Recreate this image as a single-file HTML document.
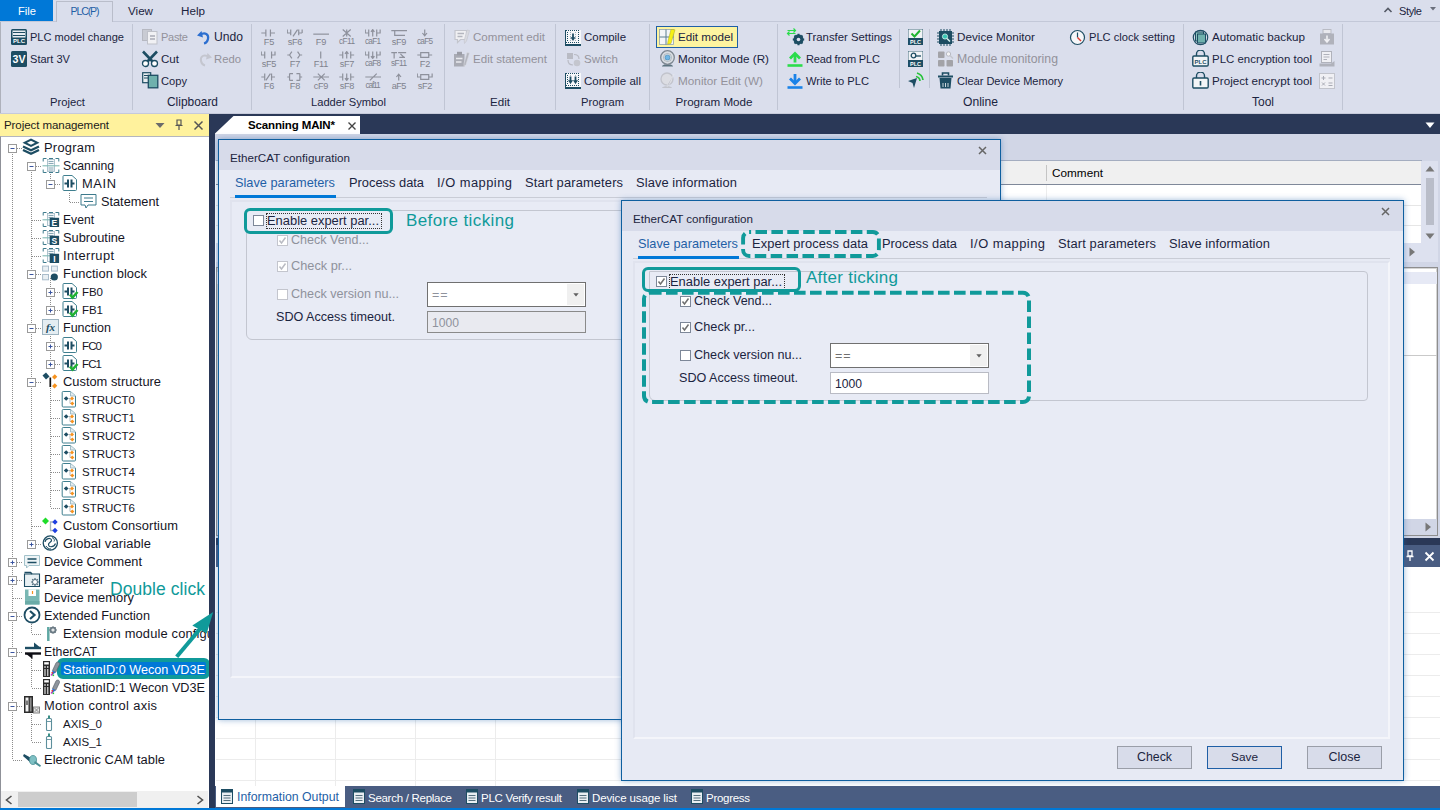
<!DOCTYPE html>
<html lang="en"><head><meta charset="utf-8"><title>PLC Editor - EtherCAT configuration</title>
<style>
html,body{margin:0;padding:0}
body{width:1440px;height:810px;overflow:hidden;position:relative;background:#ffffff;font-family:"Liberation Sans", sans-serif}
#app{position:absolute;left:0;top:0;width:1440px;height:810px;overflow:hidden}
#app div,#app svg,#app span{position:absolute}
.t{white-space:nowrap;line-height:20px;height:20px}
</style></head>
<body><div id="app">
<div style="left:0px;top:0px;width:1440px;height:114px;background:#dadeec"></div>
<div style="left:0px;top:21px;width:1440px;height:1px;background:#c3c8d8"></div>
<div style="left:0px;top:22px;width:1px;height:92px;background:#aeb1bb"></div>
<div style="left:0px;top:113px;width:1440px;height:1px;background:#c6cada"></div>
<div style="left:0px;top:0px;width:53px;height:21px;background:#0078d7"></div>
<span class="t" style="left:18px;top:1.4px;font-size:11.17px;color:#ffffff;letter-spacing:0.005px;">File</span>
<div style="left:56px;top:1px;width:57px;height:21px;background:#dadeec;border:1px solid #b9bdca;border-bottom:none;box-sizing:border-box"></div>
<span class="t" style="left:70.5px;top:1.4px;font-size:10.58px;color:#1f5fa6;letter-spacing:-1.137px;">PLC(P)</span>
<span class="t" style="left:128px;top:1.4px;font-size:11.63px;color:#1b2440;">View</span>
<span class="t" style="left:181px;top:1.4px;font-size:11.67px;color:#1b2440;letter-spacing:0.005px;">Help</span>
<span class="t" style="left:1399px;top:1.4px;font-size:11.04px;color:#1b2440;letter-spacing:-0.383px;">Style</span>
<svg style="left:1383px;top:6px;" width="10" height="8" viewBox="0 0 10 8"><path d="M1.5 6 L5 2.5 L8.5 6" fill="none" stroke="#555a66" stroke-width="1.6"/></svg>
<svg style="left:1429px;top:6px;" width="8" height="6" viewBox="0 0 8 6"><path d="M1 1 L7 1 L4 4.5 Z" fill="#6a6f7c"/></svg>
<div style="left:132px;top:24px;width:1px;height:86px;background:#c0c5d4"></div>
<div style="left:251px;top:24px;width:1px;height:86px;background:#c0c5d4"></div>
<div style="left:444px;top:24px;width:1px;height:86px;background:#c0c5d4"></div>
<div style="left:555px;top:24px;width:1px;height:86px;background:#c0c5d4"></div>
<div style="left:649px;top:24px;width:1px;height:86px;background:#c0c5d4"></div>
<div style="left:777px;top:24px;width:1px;height:86px;background:#c0c5d4"></div>
<div style="left:1183px;top:24px;width:1px;height:86px;background:#c0c5d4"></div>
<div style="left:1342px;top:24px;width:1px;height:86px;background:#c0c5d4"></div>
<div style="left:899px;top:29px;width:1px;height:59px;background:#c0c5d4"></div>
<div style="left:929px;top:29px;width:1px;height:59px;background:#c0c5d4"></div>
<span class="t" style="left:50.0px;top:92.4px;font-size:11.24px;color:#1b2440;letter-spacing:0.005px;">Project</span>
<span class="t" style="left:167.0px;top:92.4px;font-size:11.91px;color:#1b2440;letter-spacing:0.004px;">Clipboard</span>
<span class="t" style="left:311.0px;top:92.4px;font-size:11.15px;color:#1b2440;letter-spacing:0.005px;">Ladder Symbol</span>
<span class="t" style="left:490.0px;top:92.4px;font-size:11.6px;color:#1b2440;letter-spacing:0.005px;">Edit</span>
<span class="t" style="left:581.0px;top:92.4px;font-size:11.21px;color:#1b2440;letter-spacing:0.005px;">Program</span>
<span class="t" style="left:675.5px;top:92.4px;font-size:11.64px;color:#1b2440;letter-spacing:0.010px;">Program Mode</span>
<span class="t" style="left:963.0px;top:92.4px;font-size:12.11px;color:#1b2440;letter-spacing:-0.003px;">Online</span>
<span class="t" style="left:1252.0px;top:92.4px;font-size:11.99px;color:#1b2440;">Tool</span>
<span class="t" style="left:30px;top:27.4px;font-size:11.05px;color:#1b2440;letter-spacing:0.002px;">PLC model change</span>
<span class="t" style="left:30px;top:49.4px;font-size:11.07px;color:#1b2440;letter-spacing:0.004px;">Start 3V</span>
<svg style="left:11px;top:29px;" width="16" height="16" viewBox="0 0 16 16"><rect x="0" y="0" width="16" height="16" rx="1.5" fill="#1d4d63"/><rect x="1.5" y="1.5" width="13" height="7" fill="#e8edf2"/><path d="M2 3.5H14M2 6.5H14" stroke="#1d4d63" stroke-width="1.2"/><text x="8" y="14.3" font-size="6" font-family="Liberation Sans,sans-serif" font-weight="bold" fill="#fff" text-anchor="middle">PLC</text></svg>
<svg style="left:11px;top:51px;" width="16" height="16" viewBox="0 0 16 16"><rect x="0" y="0" width="16" height="16" rx="1.5" fill="#1d4d63"/><text x="8" y="12" font-size="10" font-family="Liberation Sans,sans-serif" font-weight="bold" fill="#fff" text-anchor="middle" textLength="13" lengthAdjust="spacingAndGlyphs">3V</text></svg>
<span class="t" style="left:161px;top:27.4px;font-size:11.04px;color:#93929b;letter-spacing:-0.305px;">Paste</span>
<span class="t" style="left:161px;top:49.4px;font-size:11.56px;color:#1b2440;letter-spacing:0.016px;">Cut</span>
<span class="t" style="left:161px;top:71.4px;font-size:11.14px;color:#1b2440;letter-spacing:0.005px;">Copy</span>
<span class="t" style="left:214px;top:27.4px;font-size:12.13px;color:#1b2440;">Undo</span>
<span class="t" style="left:214px;top:49.4px;font-size:11.29px;color:#93929b;letter-spacing:0.005px;">Redo</span>
<svg style="left:142px;top:29px;" width="16" height="16" viewBox="0 0 16 16"><rect x="0.5" y="0.5" width="9" height="11" fill="#c9cbd3" stroke="#b6b8c1"/><rect x="5.5" y="2.5" width="9.5" height="12.5" fill="#f1f1f4" stroke="#bfc1c9"/><path d="M8 7H13M8 10H13" stroke="#a9abb5" stroke-width="1.3"/></svg>
<svg style="left:141px;top:50px;" width="18" height="18" viewBox="0 0 18 18"><path d="M2 1.5 L12 12 M16 1.5 L6 12" stroke="#1d4d63" stroke-width="2.6" stroke-linecap="butt"/><circle cx="4.5" cy="13.5" r="3" fill="#fff" stroke="#1d4d63" stroke-width="1.3"/><circle cx="13.5" cy="13.5" r="3" fill="#fff" stroke="#1d4d63" stroke-width="1.3"/></svg>
<svg style="left:142px;top:72px;" width="17" height="17" viewBox="0 0 17 17"><rect x="0.7" y="0.7" width="8" height="10" fill="#e9eef1" stroke="#1d4d63" stroke-width="1.2"/><path d="M2 3.5H6M2 6H6" stroke="#1d4d63" stroke-width="1"/><rect x="6.3" y="3.3" width="9.5" height="12.5" fill="#6fb1ad" stroke="#1d4d63" stroke-width="1.3"/></svg>
<svg style="left:196px;top:30px;" width="15" height="15" viewBox="0 0 15 15"><path d="M5.5 1 L1 5.5 L7 7.5 Z" fill="#2c6fd0"/><path d="M4 5 C9 1.5 13 4.5 12 9 C11.5 11.5 10 13 8 13.5" fill="none" stroke="#2c6fd0" stroke-width="2.2"/></svg>
<svg style="left:198px;top:52px;" width="15" height="15" viewBox="0 0 15 15"><path d="M9.5 1 L14 5.5 L8 7.5 Z" fill="#c4c6cf"/><path d="M11 5 C6 1.5 2 4.5 3 9 C3.5 11.5 5 13 7 13.5" fill="none" stroke="#c4c6cf" stroke-width="2"/></svg>
<svg style="left:261px;top:28.7px;" width="16" height="8" viewBox="-0.250 -0.500 14 7"><path d="M0 3H4M4 0V6M8 0V6M8 3H12" fill="none" stroke="#8e919c" stroke-width="1.050"/></svg>
<span class="t" style="left:263.75px;top:32.199999999999996px;font-size:9.2px;color:#7f828c;letter-spacing:-0.234px;">F5</span>
<svg style="left:287px;top:28.7px;" width="16" height="8" viewBox="-0.250 -0.500 14 7"><path d="M0 0V3H3M3 0V5M5 6L9 0M10 0V5M10 3H13M13 0V3" fill="none" stroke="#8e919c" stroke-width="1.050"/></svg>
<span class="t" style="left:287.75px;top:32.199999999999996px;font-size:9.2px;color:#7f828c;letter-spacing:-0.414px;">sF6</span>
<svg style="left:313px;top:28.7px;" width="16" height="8" viewBox="-0.250 -0.500 14 7"><path d="M0 4H14" fill="none" stroke="#8e919c" stroke-width="1.050"/></svg>
<span class="t" style="left:315.75px;top:32.199999999999996px;font-size:9.2px;color:#7f828c;letter-spacing:-0.234px;">F9</span>
<svg style="left:339px;top:28.7px;" width="16" height="8" viewBox="-0.250 -0.500 14 7"><path d="M3 0L10 6M10 0L3 6M6.5 0V6" fill="none" stroke="#8e919c" stroke-width="1.050"/></svg>
<span class="t" style="left:339.0px;top:32.199999999999996px;font-size:8.28px;color:#7f828c;letter-spacing:-0.589px;">cF11</span>
<svg style="left:365px;top:28.7px;" width="16" height="8" viewBox="-0.250 -0.500 14 7"><path d="M0 0V3H3M3 0V6M6.5 6V0M5 2L6.5 0L8 2M10 0V6M10 3H13V0" fill="none" stroke="#8e919c" stroke-width="1.050"/></svg>
<span class="t" style="left:365.0px;top:32.199999999999996px;font-size:8.28px;color:#7f828c;letter-spacing:-0.797px;">caF1</span>
<svg style="left:391px;top:28.7px;" width="16" height="8" viewBox="-0.250 -0.500 14 7"><path d="M0 1H14M3 1V5H12" fill="none" stroke="#8e919c" stroke-width="1.050"/></svg>
<span class="t" style="left:391.75px;top:32.199999999999996px;font-size:9.2px;color:#7f828c;letter-spacing:-0.414px;">sF9</span>
<svg style="left:417px;top:28.7px;" width="16" height="8" viewBox="-0.250 -0.500 14 7"><path d="M6.5 0V5M4.5 3L6.5 5.5L8.5 3" fill="none" stroke="#8e919c" stroke-width="1.050"/></svg>
<span class="t" style="left:417.0px;top:32.199999999999996px;font-size:8.28px;color:#7f828c;letter-spacing:-0.797px;">caF5</span>
<svg style="left:261px;top:50.7px;" width="16" height="8" viewBox="-0.250 -0.500 14 7"><path d="M0 0V3H3M3 0V6M9 0V6M9 3H12V0" fill="none" stroke="#8e919c" stroke-width="1.050"/></svg>
<span class="t" style="left:261.75px;top:54.199999999999996px;font-size:9.2px;color:#7f828c;letter-spacing:-0.414px;">sF5</span>
<svg style="left:287px;top:50.7px;" width="16" height="8" viewBox="-0.250 -0.500 14 7"><path d="M0 3H2M4 0L2 3L4 6M9 0L11 3L9 6M11 3H13" fill="none" stroke="#8e919c" stroke-width="1.050"/></svg>
<span class="t" style="left:289.75px;top:54.199999999999996px;font-size:9.2px;color:#7f828c;letter-spacing:-0.234px;">F7</span>
<svg style="left:313px;top:50.7px;" width="16" height="8" viewBox="-0.250 -0.500 14 7"><path d="M6.5 0V6" fill="none" stroke="#8e919c" stroke-width="1.050"/></svg>
<span class="t" style="left:313.75px;top:54.199999999999996px;font-size:9.2px;color:#7f828c;letter-spacing:-0.328px;">F11</span>
<svg style="left:339px;top:50.7px;" width="16" height="8" viewBox="-0.250 -0.500 14 7"><path d="M0 3H3M3 0V6M6.5 6V0M5 2L6.5 0L8 2M10 0V6M10 3H13" fill="none" stroke="#8e919c" stroke-width="1.050"/></svg>
<span class="t" style="left:339.75px;top:54.199999999999996px;font-size:9.2px;color:#7f828c;letter-spacing:-0.414px;">sF7</span>
<svg style="left:365px;top:50.7px;" width="16" height="8" viewBox="-0.250 -0.500 14 7"><path d="M0 0V3H3M3 0V6M6.5 0V6M5 4L6.5 6L8 4M10 0V6M10 3H13V0" fill="none" stroke="#8e919c" stroke-width="1.050"/></svg>
<span class="t" style="left:365.0px;top:54.199999999999996px;font-size:8.28px;color:#7f828c;letter-spacing:-0.797px;">caF8</span>
<svg style="left:391px;top:50.7px;" width="16" height="8" viewBox="-0.250 -0.500 14 7"><path d="M0 1H5M2.5 1V6M6 1H13M7 5H12M8 2L11 5" fill="none" stroke="#8e919c" stroke-width="1.050"/></svg>
<span class="t" style="left:391.0px;top:54.199999999999996px;font-size:8.28px;color:#7f828c;letter-spacing:-0.589px;">sF11</span>
<svg style="left:417px;top:50.7px;" width="16" height="8" viewBox="-0.250 -0.500 14 7"><path d="M0 3H3M3 1H10V5H3ZM10 3H13" fill="none" stroke="#8e919c" stroke-width="1.050"/></svg>
<span class="t" style="left:419.75px;top:54.199999999999996px;font-size:9.2px;color:#7f828c;letter-spacing:-0.234px;">F2</span>
<svg style="left:261px;top:72.7px;" width="16" height="8" viewBox="-0.250 -0.500 14 7"><path d="M0 3H3M3 0V6M4 6L8 0M9 0V6M9 3H12" fill="none" stroke="#8e919c" stroke-width="1.050"/></svg>
<span class="t" style="left:263.75px;top:76.2px;font-size:9.2px;color:#7f828c;letter-spacing:-0.234px;">F6</span>
<svg style="left:287px;top:72.7px;" width="16" height="8" viewBox="-0.250 -0.500 14 7"><path d="M0 3H2M2 0H5M2 0V6M2 6H5M8 0H11M11 0V6M8 6H11M11 3H13" fill="none" stroke="#8e919c" stroke-width="1.050"/></svg>
<span class="t" style="left:289.75px;top:76.2px;font-size:9.2px;color:#7f828c;letter-spacing:-0.234px;">F8</span>
<svg style="left:313px;top:72.7px;" width="16" height="8" viewBox="-0.250 -0.500 14 7"><path d="M0 3H14M4 0L10 6M10 0L4 6" fill="none" stroke="#8e919c" stroke-width="1.050"/></svg>
<span class="t" style="left:313.75px;top:76.2px;font-size:9.2px;color:#7f828c;letter-spacing:-0.414px;">cF9</span>
<svg style="left:339px;top:72.7px;" width="16" height="8" viewBox="-0.250 -0.500 14 7"><path d="M0 3H3M3 0V6M6.5 0V6M5 4L6.5 6L8 4M10 0V6M10 3H13" fill="none" stroke="#8e919c" stroke-width="1.050"/></svg>
<span class="t" style="left:339.75px;top:76.2px;font-size:9.2px;color:#7f828c;letter-spacing:-0.414px;">sF8</span>
<svg style="left:365px;top:72.7px;" width="16" height="8" viewBox="-0.250 -0.500 14 7"><path d="M0 3H14M4 6L10 0" fill="none" stroke="#8e919c" stroke-width="1.050"/></svg>
<span class="t" style="left:365.5px;top:76.2px;font-size:8.28px;color:#7f828c;letter-spacing:-1.152px;">caf11</span>
<svg style="left:391px;top:72.7px;" width="16" height="8" viewBox="-0.250 -0.500 14 7"><path d="M6.5 6V0.5M4.5 3L6.5 0.5L8.5 3" fill="none" stroke="#8e919c" stroke-width="1.050"/></svg>
<span class="t" style="left:391.75px;top:76.2px;font-size:9.2px;color:#7f828c;letter-spacing:-0.672px;">aF5</span>
<svg style="left:417px;top:72.7px;" width="16" height="8" viewBox="-0.250 -0.500 14 7"><path d="M0 0V3H3M3 1H10V5H3ZM10 3H13V0" fill="none" stroke="#8e919c" stroke-width="1.050"/></svg>
<span class="t" style="left:417.75px;top:76.2px;font-size:9.2px;color:#7f828c;letter-spacing:-0.414px;">sF2</span>
<span class="t" style="left:473px;top:27.4px;font-size:11.57px;color:#93929b;">Comment edit</span>
<span class="t" style="left:473px;top:49.4px;font-size:11.57px;color:#93929b;letter-spacing:0.006px;">Edit statement</span>
<svg style="left:453px;top:29px;" width="18" height="16" viewBox="0 0 18 16"><path d="M2 1.5H13.500V10.500H7.500L4.500 13.500V10.500H2Z" fill="#f0f0f3" stroke="#c3c5cd" stroke-width="1.2"/><path d="M4.500 4.500H11M4.500 7.500H9.500" stroke="#b4b6bf" stroke-width="1.6"/><path d="M16.500 1.500L13.500 12L11.500 14.500L11.200 11.500L14 1Z" fill="#d9dae0" stroke="#c3c5cd" stroke-width="0.6"/></svg>
<svg style="left:453px;top:51px;" width="18" height="16" viewBox="0 0 18 16"><path d="M1 3H11.500V15.500H1Z" fill="#a9abb4"/><rect x="4" y="0.800" width="5" height="3.500" fill="#9b9da6"/><path d="M3 7.500H9.500M3 11H8.500" stroke="#e9eaee" stroke-width="1.6"/><path d="M16.500 2L13 13.500L11 15.500L11 12.500L14 1.500Z" fill="#b4b6bf" stroke="#dadbe1" stroke-width="0.6"/></svg>
<span class="t" style="left:584px;top:27.4px;font-size:11.45px;color:#1b2440;letter-spacing:0.008px;">Compile</span>
<span class="t" style="left:584px;top:49.4px;font-size:11.54px;color:#93929b;letter-spacing:0.006px;">Switch</span>
<span class="t" style="left:584px;top:71.4px;font-size:11.52px;color:#1b2440;letter-spacing:0.003px;">Compile all</span>
<svg style="left:565px;top:30px;" width="16" height="16" viewBox="0 0 16 16"><rect x="0" y="0" width="16" height="16" fill="#f7f8fa"/><path d="M1 0.500H15" stroke="#1d4d63" stroke-width="1" stroke-dasharray="1 1"/><path d="M2.500 2V12M13.500 2V12" stroke="#1d4d63" stroke-width="1" stroke-dasharray="1 1"/><path d="M5.500 2V12M10.500 2V12" stroke="#9fb4bf" stroke-width="1" stroke-dasharray="1 1"/><path d="M1 12.500H15" stroke="#1d4d63" stroke-width="1" stroke-dasharray="1 1"/><path d="M8 3.500V8" stroke="#1d4d63" stroke-width="1.800"/><path d="M5.4 7.200H10.6L8 11Z" fill="#1d4d63"/><path d="M0 15H16" stroke="#1d4d63" stroke-width="2"/><path d="M0.500 0V16" stroke="#1d4d63" stroke-width="1"/></svg>
<svg style="left:565px;top:52px;" width="17" height="15" viewBox="0 0 17 15"><rect x="2" y="1" width="6" height="6" fill="#b9bbc4"/><circle cx="12" cy="11" r="3.300" fill="#c4c6ce"/><path d="M3 8C3 11.500 5 13 8 13M9 2.500C12.500 2.500 14 4.500 14 7" fill="none" stroke="#b9bbc4" stroke-width="1.200"/></svg>
<svg style="left:565px;top:73px;" width="16" height="16" viewBox="0 0 16 16"><rect x="0" y="0" width="16" height="16" fill="#f7f8fa"/><path d="M1 0.500H15" stroke="#1d4d63" stroke-width="1" stroke-dasharray="1 1"/><path d="M2.500 2V12M13.500 2V12" stroke="#1d4d63" stroke-width="1" stroke-dasharray="1 1"/><path d="M5.500 2V12M10.500 2V12" stroke="#9fb4bf" stroke-width="1" stroke-dasharray="1 1"/><path d="M1 12.500H15" stroke="#1d4d63" stroke-width="1" stroke-dasharray="1 1"/><path d="M5.5 3.500V8" stroke="#1d4d63" stroke-width="1.800"/><path d="M2.9 7.200H8.1L5.5 11Z" fill="#1d4d63"/><path d="M10.5 3.500V8" stroke="#1d4d63" stroke-width="1.800"/><path d="M7.9 7.200H13.1L10.5 11Z" fill="#1d4d63"/><path d="M0 15H16" stroke="#1d4d63" stroke-width="2"/><path d="M0.500 0V16" stroke="#1d4d63" stroke-width="1"/></svg>
<div style="left:656px;top:26px;width:82px;height:22px;background:#fdf4a0;border:1px solid #1f5fa6;box-sizing:border-box"></div>
<span class="t" style="left:678px;top:27.4px;font-size:11.64px;color:#1b2440;letter-spacing:0.007px;">Edit model</span>
<span class="t" style="left:678px;top:49.4px;font-size:11.7px;color:#1b2440;letter-spacing:0.004px;">Monitor Mode (R)</span>
<span class="t" style="left:678px;top:71.4px;font-size:11.77px;color:#93929b;">Monitor Edit (W)</span>
<svg style="left:659px;top:29px;" width="17" height="17" viewBox="0 0 17 17"><rect x="0.500" y="0.500" width="14" height="15" fill="#f4f5f7" stroke="#8fa3ae" stroke-width="0.800"/><path d="M0.500 8H14.500M7 0.500V15.500" stroke="#5d7f8f" stroke-width="1"/><path d="M12 0.300L16 0.800L12 14.500L8.500 15.300L9 12Z" fill="#f6f014" stroke="#a8a52a" stroke-width="0.500"/></svg>
<svg style="left:659px;top:50px;" width="17" height="17" viewBox="0 0 17 17"><path d="M3 16.500C3 13.500 14 13.500 14 16.500Z" fill="#5d7480"/><circle cx="8.500" cy="7.500" r="6.800" fill="#d9dde3" stroke="#7d8791" stroke-width="1.300"/><circle cx="8.500" cy="7.500" r="4" fill="#f3f5f7" stroke="#9aa4ad" stroke-width="0.800"/><circle cx="8.500" cy="7.500" r="2.600" fill="#6fb6e6" stroke="#4a86ad" stroke-width="0.700"/></svg>
<svg style="left:659px;top:72px;" width="17" height="17" viewBox="0 0 17 17"><circle cx="8" cy="7" r="6" fill="#dcdde3" stroke="#c2c4cc" stroke-width="1.3"/><path d="M3 16C3 13.5 13 13.5 13 16Z" fill="#c2c4cc"/><path d="M15 2L10 13L8 14.5L8.5 12Z" fill="#c2c4cc" stroke="#e8e9ee" stroke-width="0.5"/></svg>
<span class="t" style="left:806px;top:27.4px;font-size:11.35px;color:#1b2440;letter-spacing:0.003px;">Transfer Settings</span>
<span class="t" style="left:806px;top:49.4px;font-size:11.04px;color:#1b2440;letter-spacing:-0.169px;">Read from PLC</span>
<span class="t" style="left:806px;top:71.4px;font-size:11.15px;color:#1b2440;letter-spacing:0.004px;">Write to PLC</span>
<svg style="left:786px;top:28px;" width="19" height="18" viewBox="0 0 19 18"><path d="M1.500 2.500H9.500M7.500 0.500L9.500 2.500L7.500 4.500" fill="none" stroke="#2bdc4b" stroke-width="1.200"/><path d="M1.500 5.500H9.500M3.500 3.500L1.500 5.500L3.500 7.500" fill="none" stroke="#2bdc4b" stroke-width="1.200"/><circle cx="12.500" cy="11.500" r="3.600" fill="none" stroke="#1d4d63" stroke-width="2.800"/><path d="M12.500 5.800V17.200M6.800 11.500H18.200M8.500 7.500L16.500 15.500M16.500 7.500L8.500 15.500" stroke="#1d4d63" stroke-width="2"/><circle cx="12.500" cy="11.500" r="1.800" fill="#dadeec"/></svg>
<svg style="left:787px;top:51px;" width="16" height="16" viewBox="0 0 16 16"><path d="M8 11.500V3.500" stroke="#2bdc4b" stroke-width="2.800"/><path d="M3 7.500L8 2.500L13 7.500" fill="none" stroke="#2bdc4b" stroke-width="2.800"/><path d="M0.500 14.500H15.500" stroke="#2bdc4b" stroke-width="2.600"/></svg>
<svg style="left:787px;top:73px;" width="16" height="16" viewBox="0 0 16 16"><path d="M8 1V9" stroke="#1a82e8" stroke-width="2.800"/><path d="M3 5.500L8 10.500L13 5.500" fill="none" stroke="#1a82e8" stroke-width="2.800"/><path d="M0.500 14.500H15.500" stroke="#1a82e8" stroke-width="2.600"/></svg>
<svg style="left:908px;top:29px;" width="15" height="16" viewBox="0 0 15 16"><rect x="0" y="0" width="15" height="16" fill="#f1f3f6" stroke="#1d4d63" stroke-width="0.8"/><rect x="0" y="9" width="15" height="7" fill="#1d4d63"/><text x="7.5" y="14.8" font-size="5.5" font-weight="bold" font-family="Liberation Sans,sans-serif" fill="#fff" text-anchor="middle">PLC</text><path d="M3.5 4.5L6.5 7.5L12 1.5" fill="none" stroke="#21b531" stroke-width="2"/></svg>
<svg style="left:908px;top:51px;" width="15" height="16" viewBox="0 0 15 16"><rect x="0" y="0" width="15" height="16" fill="#f1f3f6" stroke="#1d4d63" stroke-width="0.8"/><rect x="0" y="9" width="15" height="7" fill="#1d4d63"/><text x="7.5" y="14.8" font-size="5.5" font-weight="bold" font-family="Liberation Sans,sans-serif" fill="#fff" text-anchor="middle">PLC</text><circle cx="5.5" cy="4.5" r="2.3" fill="none" stroke="#1d4d63" stroke-width="1.3"/><path d="M7.5 5H13" stroke="#1d4d63" stroke-width="1.3"/></svg>
<svg style="left:907px;top:72px;" width="17" height="17" viewBox="0 0 17 17"><path d="M1 9L10 6L7 16L5.5 11Z" fill="#1d4d63"/><path d="M9 4.5A5 5 0 0 1 13 9M10 1A8.5 8.5 0 0 1 16 8" fill="none" stroke="#27c33a" stroke-width="1.7"/></svg>
<span class="t" style="left:957px;top:27.4px;font-size:11.7px;color:#1b2440;letter-spacing:0.004px;">Device Monitor</span>
<span class="t" style="left:957px;top:49.4px;font-size:12.28px;color:#93929b;letter-spacing:0.006px;">Module monitoring</span>
<span class="t" style="left:957px;top:71.4px;font-size:11.04px;color:#1b2440;letter-spacing:-0.003px;">Clear Device Memory</span>
<svg style="left:937px;top:29px;" width="17" height="17" viewBox="0 0 17 17"><rect x="2" y="2" width="13" height="13" fill="#1d4d63"/><path d="M4 0V17M7 0V17M10 0V17M13 0V17M0 4H17M0 7H17M0 10H17M0 13H17" stroke="#1d4d63" stroke-width="1"/><rect x="3" y="3" width="11" height="11" fill="#1d4d63"/><circle cx="8" cy="7.5" r="2.6" fill="#39c7b5" stroke="#d9f3ee" stroke-width="0.8"/><path d="M10 9.5L13 12.5" stroke="#d9f3ee" stroke-width="1.5"/></svg>
<svg style="left:937px;top:51px;" width="17" height="17" viewBox="0 0 17 17"><rect x="1" y="0.500" width="6.500" height="6.500" rx="0.800" fill="#a3a3a8"/><rect x="1" y="9" width="6.500" height="6.500" rx="0.800" fill="#a3a3a8"/><rect x="9.500" y="9" width="6.500" height="6.500" rx="0.800" fill="#a3a3a8"/><circle cx="11.500" cy="3" r="2.200" fill="#f2f2f4" stroke="#b9bbc4" stroke-width="1"/><path d="M13 4.500L16 7.500" stroke="#c4c6ce" stroke-width="1.400"/></svg>
<svg style="left:937px;top:72px;" width="17" height="17" viewBox="0 0 17 17"><path d="M1 4.5H16" stroke="#1d4d63" stroke-width="2"/><path d="M5.5 3.5V1H11.5V3.5" fill="none" stroke="#1d4d63" stroke-width="1.6"/><path d="M2.5 6H14.5L13.5 16.5H3.5Z" fill="#1d4d63"/><path d="M6 11V15M8.5 11V15M11 11V15" stroke="#dfe6ea" stroke-width="0.9"/></svg>
<span class="t" style="left:1089px;top:27.4px;font-size:11.13px;color:#1b2440;letter-spacing:0.003px;">PLC clock setting</span>
<svg style="left:1069px;top:29px;" width="17" height="17" viewBox="0 0 17 17"><circle cx="8.5" cy="8.5" r="7" fill="#f6f7f9" stroke="#1d4d63" stroke-width="1.2"/><path d="M8.5 3.5V8.5" stroke="#1d4d63" stroke-width="1.2"/><path d="M8.5 8.5L12 12" stroke="#e03a2f" stroke-width="1.4"/></svg>
<span class="t" style="left:1212px;top:27.4px;font-size:11.7px;color:#1b2440;letter-spacing:0.006px;">Automatic backup</span>
<span class="t" style="left:1212px;top:49.4px;font-size:11.46px;color:#1b2440;letter-spacing:0.003px;">PLC encryption tool</span>
<span class="t" style="left:1212px;top:71.4px;font-size:11.68px;color:#1b2440;letter-spacing:0.004px;">Project encrypt tool</span>
<svg style="left:1192px;top:29px;" width="17" height="17" viewBox="0 0 17 17"><circle cx="8.5" cy="8.5" r="7.2" fill="none" stroke="#1d4d63" stroke-width="1.2"/><rect x="3.5" y="3" width="8" height="9" fill="#8fc4bf" stroke="#1d4d63" stroke-width="1"/><rect x="5.5" y="5" width="8" height="9" fill="#6fb1ad" stroke="#1d4d63" stroke-width="1"/></svg>
<svg style="left:1192px;top:50px;" width="17" height="17" viewBox="0 0 17 17"><path d="M4.5 6V4A4 4 0 0 1 12.5 4V6" fill="none" stroke="#1d4d63" stroke-width="1.4"/><rect x="0.8" y="6" width="15.4" height="10" rx="1.2" fill="#f3f5f7" stroke="#1d4d63" stroke-width="1.4"/><text x="8.5" y="14" font-size="6" font-weight="bold" font-family="Liberation Sans,sans-serif" fill="#1d4d63" text-anchor="middle">PLC</text></svg>
<svg style="left:1192px;top:72px;" width="17" height="17" viewBox="0 0 17 17"><path d="M4.5 6V4A4 4 0 0 1 12.5 4V6" fill="none" stroke="#1d4d63" stroke-width="1.4"/><rect x="0.8" y="6" width="15.4" height="10" rx="1.2" fill="#f3f5f7" stroke="#1d4d63" stroke-width="1.4"/><path d="M8.5 9V13.5" stroke="#1d4d63" stroke-width="1.6"/></svg>
<svg style="left:1319px;top:29px;" width="16" height="16" viewBox="0 0 16 16"><rect x="4" y="0.5" width="8" height="4" fill="#e9e9ee" stroke="#b9bbc4"/><rect x="1" y="4.5" width="14" height="11" fill="#b0b2bb"/><path d="M8 6.5V12M5.5 10L8 13L10.5 10" fill="none" stroke="#f0f0f4" stroke-width="1.6"/></svg>
<svg style="left:1319px;top:51px;" width="16" height="16" viewBox="0 0 16 16"><rect x="2.5" y="0.5" width="10" height="11" fill="#f0f0f4" stroke="#b0b2bb"/><path d="M4.5 3.5H10.5M4.5 6H10.5M4.5 8.5H8" stroke="#b0b2bb" stroke-width="1"/><path d="M0.5 12.5H12L15.5 10V15.5H0.5Z" fill="#b0b2bb"/></svg>
<svg style="left:1319px;top:73px;" width="16" height="16" viewBox="0 0 16 16"><rect x="0.5" y="0.5" width="15" height="15" fill="#f0f0f4" stroke="#c2c4cc"/><path d="M2.5 5H6.5M4.5 3V7M9.5 5H13.5M3 9.5L6 12.5M6 9.5L3 12.5M9.5 10H13.5M9.5 12.5H13.5" stroke="#a9abb5" stroke-width="1"/></svg>
<div style="left:0px;top:114px;width:209px;height:22px;background:#fff29d"></div>
<span class="t" style="left:4px;top:115.4px;font-size:11.5px;color:#1b1b1b;letter-spacing:-0.066px;">Project management</span>
<svg style="left:155px;top:122px;" width="10" height="7" viewBox="0 0 10 7"><path d="M0.5 1H9.5L5 6Z" fill="#6b6b6b"/></svg>
<svg style="left:174px;top:119px;" width="10" height="12" viewBox="0 0 10 12"><path d="M3 1H7V6H3ZM1.5 6.5H8.5M5 6.5V11" fill="none" stroke="#555" stroke-width="1.2"/></svg>
<svg style="left:193px;top:120px;" width="11" height="11" viewBox="0 0 11 11"><path d="M1.5 1.5L9.5 9.5M9.5 1.5L1.5 9.5" stroke="#555" stroke-width="1.5"/></svg>
<div style="left:0px;top:136px;width:209px;height:672px;background:#ffffff;border-left:1.500px solid #8f9198;border-top:1.500px solid #b4b6be;box-sizing:border-box"></div>
<div style="left:1px;top:791px;width:207px;height:17px;background:#f0f0f0"></div>
<div style="left:18px;top:792px;width:119px;height:15px;background:#cdcdcd"></div>
<svg style="left:5px;top:795px;" width="8" height="10" viewBox="0 0 8 10"><path d="M6.5 1L1.5 5L6.5 9" fill="none" stroke="#505050" stroke-width="1.6"/></svg>
<svg style="left:196px;top:795px;" width="8" height="10" viewBox="0 0 8 10"><path d="M1.5 1L6.5 5L1.5 9" fill="none" stroke="#505050" stroke-width="1.6"/></svg>
<div style="left:12px;top:152px;width:1px;height:608px;background-image:linear-gradient(to bottom,#8c8c8c 50%,transparent 50%);background-size:1px 2px"></div>
<div style="left:31px;top:170px;width:1px;height:374px;background-image:linear-gradient(to bottom,#8c8c8c 50%,transparent 50%);background-size:1px 2px"></div>
<div style="left:50px;top:174px;width:1px;height:6px;background-image:linear-gradient(to bottom,#8c8c8c 50%,transparent 50%);background-size:1px 2px"></div>
<div style="left:69px;top:193px;width:1px;height:10px;background-image:linear-gradient(to bottom,#8c8c8c 50%,transparent 50%);background-size:1px 2px"></div>
<div style="left:50px;top:278px;width:1px;height:32px;background-image:linear-gradient(to bottom,#8c8c8c 50%,transparent 50%);background-size:1px 2px"></div>
<div style="left:50px;top:332px;width:1px;height:32px;background-image:linear-gradient(to bottom,#8c8c8c 50%,transparent 50%);background-size:1px 2px"></div>
<div style="left:50px;top:386px;width:1px;height:122px;background-image:linear-gradient(to bottom,#8c8c8c 50%,transparent 50%);background-size:1px 2px"></div>
<div style="left:31px;top:620px;width:1px;height:14px;background-image:linear-gradient(to bottom,#8c8c8c 50%,transparent 50%);background-size:1px 2px"></div>
<div style="left:31px;top:656px;width:1px;height:32px;background-image:linear-gradient(to bottom,#8c8c8c 50%,transparent 50%);background-size:1px 2px"></div>
<div style="left:31px;top:710px;width:1px;height:32px;background-image:linear-gradient(to bottom,#8c8c8c 50%,transparent 50%);background-size:1px 2px"></div>
<div style="left:60px;top:660px;width:148px;height:17px;background:#0078d7"></div>
<div style="left:57px;top:658px;width:153px;height:21px;border:4px solid #109a9a;border-top-width:4.500px;border-radius:6px;box-sizing:border-box"></div>
<span class="t" style="left:44px;top:137.8px;font-size:12.88px;color:#15151f;letter-spacing:0.271px;">Program</span>
<div style="left:13px;top:148px;width:9px;height:1px;background-image:linear-gradient(to right,#8c8c8c 50%,transparent 50%);background-size:2px 1px"></div>
<span class="t" style="left:63px;top:155.8px;font-size:12.23px;color:#15151f;letter-spacing:0.007px;">Scanning</span>
<div style="left:32px;top:166px;width:9px;height:1px;background-image:linear-gradient(to right,#8c8c8c 50%,transparent 50%);background-size:2px 1px"></div>
<span class="t" style="left:82px;top:173.8px;font-size:12.88px;color:#15151f;letter-spacing:0.604px;">MAIN</span>
<div style="left:51px;top:184px;width:9px;height:1px;background-image:linear-gradient(to right,#8c8c8c 50%,transparent 50%);background-size:2px 1px"></div>
<span class="t" style="left:101px;top:191.8px;font-size:12.72px;color:#15151f;letter-spacing:0.002px;">Statement</span>
<div style="left:70px;top:202px;width:9px;height:1px;background-image:linear-gradient(to right,#8c8c8c 50%,transparent 50%);background-size:2px 1px"></div>
<span class="t" style="left:63px;top:209.8px;font-size:12.12px;color:#15151f;letter-spacing:0.008px;">Event</span>
<div style="left:32px;top:220px;width:9px;height:1px;background-image:linear-gradient(to right,#8c8c8c 50%,transparent 50%);background-size:2px 1px"></div>
<span class="t" style="left:63px;top:227.8px;font-size:12.82px;color:#15151f;letter-spacing:0.002px;">Subroutine</span>
<div style="left:32px;top:238px;width:9px;height:1px;background-image:linear-gradient(to right,#8c8c8c 50%,transparent 50%);background-size:2px 1px"></div>
<span class="t" style="left:63px;top:245.8px;font-size:12.88px;color:#15151f;letter-spacing:0.381px;">Interrupt</span>
<div style="left:32px;top:256px;width:9px;height:1px;background-image:linear-gradient(to right,#8c8c8c 50%,transparent 50%);background-size:2px 1px"></div>
<span class="t" style="left:63px;top:263.79999999999995px;font-size:12.88px;color:#15151f;letter-spacing:0.076px;">Function block</span>
<div style="left:32px;top:274px;width:9px;height:1px;background-image:linear-gradient(to right,#8c8c8c 50%,transparent 50%);background-size:2px 1px"></div>
<span class="t" style="left:82px;top:281.79999999999995px;font-size:11.5px;color:#15151f;letter-spacing:-0.047px;">FB0</span>
<div style="left:51px;top:292px;width:9px;height:1px;background-image:linear-gradient(to right,#8c8c8c 50%,transparent 50%);background-size:2px 1px"></div>
<span class="t" style="left:82px;top:299.79999999999995px;font-size:11.5px;color:#15151f;letter-spacing:-0.047px;">FB1</span>
<div style="left:51px;top:310px;width:9px;height:1px;background-image:linear-gradient(to right,#8c8c8c 50%,transparent 50%);background-size:2px 1px"></div>
<span class="t" style="left:63px;top:317.79999999999995px;font-size:12.51px;color:#15151f;letter-spacing:0.007px;">Function</span>
<div style="left:32px;top:328px;width:9px;height:1px;background-image:linear-gradient(to right,#8c8c8c 50%,transparent 50%);background-size:2px 1px"></div>
<span class="t" style="left:82px;top:335.79999999999995px;font-size:11.5px;color:#15151f;letter-spacing:-0.867px;">FC0</span>
<div style="left:51px;top:346px;width:9px;height:1px;background-image:linear-gradient(to right,#8c8c8c 50%,transparent 50%);background-size:2px 1px"></div>
<span class="t" style="left:82px;top:353.79999999999995px;font-size:11.5px;color:#15151f;letter-spacing:-0.867px;">FC1</span>
<div style="left:51px;top:364px;width:9px;height:1px;background-image:linear-gradient(to right,#8c8c8c 50%,transparent 50%);background-size:2px 1px"></div>
<span class="t" style="left:63px;top:371.79999999999995px;font-size:12.87px;color:#15151f;letter-spacing:0.006px;">Custom structure</span>
<div style="left:32px;top:382px;width:9px;height:1px;background-image:linear-gradient(to right,#8c8c8c 50%,transparent 50%);background-size:2px 1px"></div>
<span class="t" style="left:82px;top:389.79999999999995px;font-size:11.5px;color:#15151f;letter-spacing:-0.005px;">STRUCT0</span>
<div style="left:51px;top:400px;width:9px;height:1px;background-image:linear-gradient(to right,#8c8c8c 50%,transparent 50%);background-size:2px 1px"></div>
<span class="t" style="left:82px;top:407.79999999999995px;font-size:11.5px;color:#15151f;letter-spacing:-0.005px;">STRUCT1</span>
<div style="left:51px;top:418px;width:9px;height:1px;background-image:linear-gradient(to right,#8c8c8c 50%,transparent 50%);background-size:2px 1px"></div>
<span class="t" style="left:82px;top:425.79999999999995px;font-size:11.5px;color:#15151f;letter-spacing:-0.005px;">STRUCT2</span>
<div style="left:51px;top:436px;width:9px;height:1px;background-image:linear-gradient(to right,#8c8c8c 50%,transparent 50%);background-size:2px 1px"></div>
<span class="t" style="left:82px;top:443.79999999999995px;font-size:11.5px;color:#15151f;letter-spacing:-0.005px;">STRUCT3</span>
<div style="left:51px;top:454px;width:9px;height:1px;background-image:linear-gradient(to right,#8c8c8c 50%,transparent 50%);background-size:2px 1px"></div>
<span class="t" style="left:82px;top:461.79999999999995px;font-size:11.5px;color:#15151f;letter-spacing:-0.005px;">STRUCT4</span>
<div style="left:51px;top:472px;width:9px;height:1px;background-image:linear-gradient(to right,#8c8c8c 50%,transparent 50%);background-size:2px 1px"></div>
<span class="t" style="left:82px;top:479.79999999999995px;font-size:11.5px;color:#15151f;letter-spacing:-0.005px;">STRUCT5</span>
<div style="left:51px;top:490px;width:9px;height:1px;background-image:linear-gradient(to right,#8c8c8c 50%,transparent 50%);background-size:2px 1px"></div>
<span class="t" style="left:82px;top:497.79999999999995px;font-size:11.5px;color:#15151f;letter-spacing:-0.005px;">STRUCT6</span>
<div style="left:51px;top:508px;width:9px;height:1px;background-image:linear-gradient(to right,#8c8c8c 50%,transparent 50%);background-size:2px 1px"></div>
<span class="t" style="left:63px;top:515.8px;font-size:12.88px;color:#15151f;letter-spacing:0.077px;">Custom Consortium</span>
<div style="left:32px;top:526px;width:9px;height:1px;background-image:linear-gradient(to right,#8c8c8c 50%,transparent 50%);background-size:2px 1px"></div>
<span class="t" style="left:63px;top:533.8px;font-size:12.88px;color:#15151f;letter-spacing:0.151px;">Global variable</span>
<div style="left:32px;top:544px;width:9px;height:1px;background-image:linear-gradient(to right,#8c8c8c 50%,transparent 50%);background-size:2px 1px"></div>
<span class="t" style="left:44px;top:551.8px;font-size:12.78px;color:#15151f;letter-spacing:0.007px;">Device Comment</span>
<div style="left:13px;top:562px;width:9px;height:1px;background-image:linear-gradient(to right,#8c8c8c 50%,transparent 50%);background-size:2px 1px"></div>
<span class="t" style="left:44px;top:569.8px;font-size:12.85px;color:#15151f;letter-spacing:0.004px;">Parameter</span>
<div style="left:13px;top:580px;width:9px;height:1px;background-image:linear-gradient(to right,#8c8c8c 50%,transparent 50%);background-size:2px 1px"></div>
<span class="t" style="left:44px;top:587.8px;font-size:12.88px;color:#15151f;letter-spacing:0.047px;">Device memory</span>
<div style="left:13px;top:598px;width:9px;height:1px;background-image:linear-gradient(to right,#8c8c8c 50%,transparent 50%);background-size:2px 1px"></div>
<span class="t" style="left:44px;top:605.8px;font-size:12.71px;color:#15151f;letter-spacing:0.004px;">Extended Function</span>
<div style="left:13px;top:616px;width:9px;height:1px;background-image:linear-gradient(to right,#8c8c8c 50%,transparent 50%);background-size:2px 1px"></div>
<span class="t" style="left:63px;top:623.8px;font-size:12.88px;color:#15151f;letter-spacing:0.154px;">Extension module configu</span>
<div style="left:32px;top:634px;width:9px;height:1px;background-image:linear-gradient(to right,#8c8c8c 50%,transparent 50%);background-size:2px 1px"></div>
<span class="t" style="left:44px;top:641.8px;font-size:12.28px;color:#15151f;letter-spacing:0.009px;">EtherCAT</span>
<div style="left:13px;top:652px;width:9px;height:1px;background-image:linear-gradient(to right,#8c8c8c 50%,transparent 50%);background-size:2px 1px"></div>
<span class="t" style="left:63px;top:659.8px;font-size:12.67px;color:#ffffff;letter-spacing:0.006px;">StationID:0 Wecon VD3E</span>
<div style="left:32px;top:670px;width:9px;height:1px;background-image:linear-gradient(to right,#8c8c8c 50%,transparent 50%);background-size:2px 1px"></div>
<span class="t" style="left:63px;top:677.8px;font-size:12.67px;color:#15151f;letter-spacing:0.006px;">StationID:1 Wecon VD3E</span>
<div style="left:32px;top:688px;width:9px;height:1px;background-image:linear-gradient(to right,#8c8c8c 50%,transparent 50%);background-size:2px 1px"></div>
<span class="t" style="left:44px;top:695.8px;font-size:12.88px;color:#15151f;letter-spacing:0.314px;">Motion control axis</span>
<div style="left:13px;top:706px;width:9px;height:1px;background-image:linear-gradient(to right,#8c8c8c 50%,transparent 50%);background-size:2px 1px"></div>
<span class="t" style="left:63px;top:713.8px;font-size:11.5px;color:#15151f;">AXIS_0</span>
<div style="left:32px;top:724px;width:9px;height:1px;background-image:linear-gradient(to right,#8c8c8c 50%,transparent 50%);background-size:2px 1px"></div>
<span class="t" style="left:63px;top:731.8px;font-size:11.5px;color:#15151f;">AXIS_1</span>
<div style="left:32px;top:742px;width:9px;height:1px;background-image:linear-gradient(to right,#8c8c8c 50%,transparent 50%);background-size:2px 1px"></div>
<span class="t" style="left:44px;top:749.8px;font-size:12.88px;color:#15151f;letter-spacing:0.041px;">Electronic CAM table</span>
<div style="left:13px;top:760px;width:9px;height:1px;background-image:linear-gradient(to right,#8c8c8c 50%,transparent 50%);background-size:2px 1px"></div>
<svg style="left:8px;top:144px;" width="9" height="9" viewBox="0 0 9 9"><rect x="0.5" y="0.5" width="8" height="8" fill="#fff" stroke="#9a9a9a"/><path d="M2.5 4.5H6.5" stroke="#3a55a0" stroke-width="1"/></svg>
<svg style="left:27px;top:162px;" width="9" height="9" viewBox="0 0 9 9"><rect x="0.5" y="0.5" width="8" height="8" fill="#fff" stroke="#9a9a9a"/><path d="M2.5 4.5H6.5" stroke="#3a55a0" stroke-width="1"/></svg>
<svg style="left:46px;top:180px;" width="9" height="9" viewBox="0 0 9 9"><rect x="0.5" y="0.5" width="8" height="8" fill="#fff" stroke="#9a9a9a"/><path d="M2.5 4.5H6.5" stroke="#3a55a0" stroke-width="1"/></svg>
<svg style="left:27px;top:270px;" width="9" height="9" viewBox="0 0 9 9"><rect x="0.5" y="0.5" width="8" height="8" fill="#fff" stroke="#9a9a9a"/><path d="M2.5 4.5H6.5" stroke="#3a55a0" stroke-width="1"/></svg>
<svg style="left:46px;top:288px;" width="9" height="9" viewBox="0 0 9 9"><rect x="0.5" y="0.5" width="8" height="8" fill="#fff" stroke="#9a9a9a"/><path d="M2.5 4.5H6.5M4.5 2.5V6.5" stroke="#3a55a0" stroke-width="1"/></svg>
<svg style="left:46px;top:306px;" width="9" height="9" viewBox="0 0 9 9"><rect x="0.5" y="0.5" width="8" height="8" fill="#fff" stroke="#9a9a9a"/><path d="M2.5 4.5H6.5M4.5 2.5V6.5" stroke="#3a55a0" stroke-width="1"/></svg>
<svg style="left:27px;top:324px;" width="9" height="9" viewBox="0 0 9 9"><rect x="0.5" y="0.5" width="8" height="8" fill="#fff" stroke="#9a9a9a"/><path d="M2.5 4.5H6.5" stroke="#3a55a0" stroke-width="1"/></svg>
<svg style="left:46px;top:342px;" width="9" height="9" viewBox="0 0 9 9"><rect x="0.5" y="0.5" width="8" height="8" fill="#fff" stroke="#9a9a9a"/><path d="M2.5 4.5H6.5M4.5 2.5V6.5" stroke="#3a55a0" stroke-width="1"/></svg>
<svg style="left:46px;top:360px;" width="9" height="9" viewBox="0 0 9 9"><rect x="0.5" y="0.5" width="8" height="8" fill="#fff" stroke="#9a9a9a"/><path d="M2.5 4.5H6.5M4.5 2.5V6.5" stroke="#3a55a0" stroke-width="1"/></svg>
<svg style="left:27px;top:378px;" width="9" height="9" viewBox="0 0 9 9"><rect x="0.5" y="0.5" width="8" height="8" fill="#fff" stroke="#9a9a9a"/><path d="M2.5 4.5H6.5" stroke="#3a55a0" stroke-width="1"/></svg>
<svg style="left:27px;top:540px;" width="9" height="9" viewBox="0 0 9 9"><rect x="0.5" y="0.5" width="8" height="8" fill="#fff" stroke="#9a9a9a"/><path d="M2.5 4.5H6.5M4.5 2.5V6.5" stroke="#3a55a0" stroke-width="1"/></svg>
<svg style="left:8px;top:558px;" width="9" height="9" viewBox="0 0 9 9"><rect x="0.5" y="0.5" width="8" height="8" fill="#fff" stroke="#9a9a9a"/><path d="M2.5 4.5H6.5M4.5 2.5V6.5" stroke="#3a55a0" stroke-width="1"/></svg>
<svg style="left:8px;top:576px;" width="9" height="9" viewBox="0 0 9 9"><rect x="0.5" y="0.5" width="8" height="8" fill="#fff" stroke="#9a9a9a"/><path d="M2.5 4.5H6.5M4.5 2.5V6.5" stroke="#3a55a0" stroke-width="1"/></svg>
<svg style="left:8px;top:612px;" width="9" height="9" viewBox="0 0 9 9"><rect x="0.5" y="0.5" width="8" height="8" fill="#fff" stroke="#9a9a9a"/><path d="M2.5 4.5H6.5" stroke="#3a55a0" stroke-width="1"/></svg>
<svg style="left:8px;top:648px;" width="9" height="9" viewBox="0 0 9 9"><rect x="0.5" y="0.5" width="8" height="8" fill="#fff" stroke="#9a9a9a"/><path d="M2.5 4.5H6.5" stroke="#3a55a0" stroke-width="1"/></svg>
<svg style="left:8px;top:702px;" width="9" height="9" viewBox="0 0 9 9"><rect x="0.5" y="0.5" width="8" height="8" fill="#fff" stroke="#9a9a9a"/><path d="M2.5 4.5H6.5" stroke="#3a55a0" stroke-width="1"/></svg>
<svg style="left:22px;top:138px;" width="18" height="18" viewBox="0 0 18 18"><path d="M9 0.500L17.500 4.800L9 9L0.500 4.800Z" fill="#1d4d63"/><path d="M9 2.800L13 4.800L9 6.800L5 4.800Z" fill="#fff"/><path d="M1 8.500L9 12.300L17 8.500M1 12L9 15.800L17 12" fill="none" stroke="#1d4d63" stroke-width="2.300"/></svg>
<svg style="left:42px;top:156px;" width="18" height="18" viewBox="0 0 18 18"><path d="M1.200 5.500V2.500H4.500M7 2.500H11M13.500 2.500H16.800V5.500M1.200 13.500V16.500H4.500" stroke="#3d7a8c" stroke-width="1" fill="none"/><path d="M16.800 13.500V16.500H13.500M7 16.500H11" stroke="#3d7a8c" stroke-width="1" fill="none"/><rect x="5.500" y="3.500" width="7" height="12" fill="#f4f7f9" stroke="#9db6c2" stroke-width="0.800"/><path d="M6.500 5.500H11.500M6.500 7.500H11.500" stroke="#7f9fae" stroke-width="0.900"/><path d="M6.500 12H11.500M6.500 14H11.500" stroke="#7f9fae" stroke-width="0.900"/><path d="M0.500 9.800H17.500" stroke="#7fb9b4" stroke-width="1.100"/></svg>
<svg style="left:61px;top:174px;" width="18" height="18" viewBox="0 0 18 18"><path d="M3 1.500H11L15.500 5.500V15.500Q15.500 16.500 14.500 16.500H3Q2 16.500 2 15.500V2.500Q2 1.500 3 1.500Z" fill="#fff" stroke="#3f7f8f" stroke-width="1"/><path d="M3.500 9.500H7M7 5.500V13.500M10.500 5.500V13.500M10.500 9.500H13.500" stroke="#1d4d63" stroke-width="2"/></svg>
<svg style="left:80px;top:192px;" width="18" height="18" viewBox="0 0 18 18"><path d="M1 2.500H16V13H8L6 16L5 13H1Z" fill="#fff" stroke="#3d7a8c" stroke-width="1"/><path d="M4 6H13M4 9.500H13" stroke="#3d7a8c" stroke-width="1"/></svg>
<svg style="left:42px;top:210px;" width="18" height="18" viewBox="0 0 18 18"><path d="M1.200 5.500V2.500H4.500M7 2.500H11M13.500 2.500H16.800V5.500M1.200 13.500V16.500H4.500" stroke="#3d7a8c" stroke-width="1" fill="none"/><rect x="5.500" y="3.500" width="7" height="12" fill="#f4f7f9" stroke="#9db6c2" stroke-width="0.800"/><path d="M6.500 5.500H11.500M6.500 7.500H11.500" stroke="#7f9fae" stroke-width="0.900"/><path d="M0.500 9.800H8" stroke="#7fb9b4" stroke-width="1.100"/><rect x="7.700" y="7.800" width="9.400" height="9.200" fill="#1d4d63"/><text x="12.400" y="15.500" font-size="8.500" font-weight="bold" font-family="Liberation Sans,sans-serif" fill="#fff" text-anchor="middle">E</text></svg>
<svg style="left:42px;top:228px;" width="18" height="18" viewBox="0 0 18 18"><path d="M1.200 5.500V2.500H4.500M7 2.500H11M13.500 2.500H16.800V5.500M1.200 13.500V16.500H4.500" stroke="#3d7a8c" stroke-width="1" fill="none"/><rect x="5.500" y="3.500" width="7" height="12" fill="#f4f7f9" stroke="#9db6c2" stroke-width="0.800"/><path d="M6.500 5.500H11.500M6.500 7.500H11.500" stroke="#7f9fae" stroke-width="0.900"/><path d="M0.500 9.800H8" stroke="#7fb9b4" stroke-width="1.100"/><rect x="7.700" y="7.800" width="9.400" height="9.200" fill="#1d4d63"/><text x="12.400" y="15.500" font-size="8.500" font-weight="bold" font-family="Liberation Sans,sans-serif" fill="#fff" text-anchor="middle">S</text></svg>
<svg style="left:42px;top:246px;" width="18" height="18" viewBox="0 0 18 18"><path d="M1.200 5.500V2.500H4.500M7 2.500H11M13.500 2.500H16.800V5.500M1.200 13.500V16.500H4.500" stroke="#3d7a8c" stroke-width="1" fill="none"/><rect x="5.500" y="3.500" width="7" height="12" fill="#f4f7f9" stroke="#9db6c2" stroke-width="0.800"/><path d="M6.500 5.500H11.500M6.500 7.500H11.500" stroke="#7f9fae" stroke-width="0.900"/><path d="M0.500 9.800H8" stroke="#7fb9b4" stroke-width="1.100"/><rect x="7.700" y="7.800" width="9.400" height="9.200" fill="#1d4d63"/><text x="12.400" y="15.500" font-size="8.500" font-weight="bold" font-family="Liberation Sans,sans-serif" fill="#fff" text-anchor="middle">I</text></svg>
<svg style="left:42px;top:264px;" width="18" height="18" viewBox="0 0 18 18"><rect x="0.600" y="2.100" width="5.900" height="5" fill="#e9eff3" stroke="#a9bccb" stroke-width="1"/><rect x="9.500" y="2.100" width="5.900" height="5" fill="#e9eff3" stroke="#a9bccb" stroke-width="1"/><rect x="0.600" y="10.500" width="5.900" height="5.300" fill="#e9eff3" stroke="#a9bccb" stroke-width="1"/><circle cx="12.300" cy="13" r="3.600" fill="#1d4d63"/></svg>
<svg style="left:61px;top:282px;" width="18" height="18" viewBox="0 0 18 18"><path d="M3 1.500H11L15.500 5.500V15.500Q15.500 16.500 14.500 16.500H3Q2 16.500 2 15.500V2.500Q2 1.500 3 1.500Z" fill="#fff" stroke="#3f7f8f" stroke-width="1"/><path d="M3.500 9.500H7M7 5.500V13.500M10.500 5.500V13.500M10.500 9.500H13.500" stroke="#1d4d63" stroke-width="2"/><path d="M9 12.500L11.500 15.500L16.500 10" fill="none" stroke="#1fb233" stroke-width="2.600"/></svg>
<svg style="left:61px;top:300px;" width="18" height="18" viewBox="0 0 18 18"><path d="M3 1.500H11L15.500 5.500V15.500Q15.500 16.500 14.500 16.500H3Q2 16.500 2 15.500V2.500Q2 1.500 3 1.500Z" fill="#fff" stroke="#3f7f8f" stroke-width="1"/><path d="M3.500 9.500H7M7 5.500V13.500M10.500 5.500V13.500M10.500 9.500H13.500" stroke="#1d4d63" stroke-width="2"/><path d="M9 12.500L11.500 15.500L16.500 10" fill="none" stroke="#1fb233" stroke-width="2.600"/></svg>
<svg style="left:61px;top:336px;" width="18" height="18" viewBox="0 0 18 18"><path d="M3 1.500H11L15.500 5.500V15.500Q15.500 16.500 14.500 16.500H3Q2 16.500 2 15.500V2.500Q2 1.500 3 1.500Z" fill="#fff" stroke="#3f7f8f" stroke-width="1"/><path d="M3.500 9.500H7M7 5.500V13.500M10.500 5.500V13.500M10.500 9.500H13.500" stroke="#1d4d63" stroke-width="2"/></svg>
<svg style="left:61px;top:354px;" width="18" height="18" viewBox="0 0 18 18"><path d="M3 1.500H11L15.500 5.500V15.500Q15.500 16.500 14.500 16.500H3Q2 16.500 2 15.500V2.500Q2 1.500 3 1.500Z" fill="#fff" stroke="#3f7f8f" stroke-width="1"/><path d="M3.500 9.500H7M7 5.500V13.500M10.500 5.500V13.500M10.500 9.500H13.500" stroke="#1d4d63" stroke-width="2"/><path d="M9 12.500L11.500 15.500L16.500 10" fill="none" stroke="#1fb233" stroke-width="2.600"/></svg>
<svg style="left:42px;top:318px;" width="18" height="18" viewBox="0 0 18 18"><rect x="0.5" y="1.5" width="16" height="15" fill="#e4edf2" stroke="#9db3c0" stroke-width="1"/><text x="8.5" y="13" font-size="11" font-style="italic" font-weight="bold" font-family="Liberation Serif,serif" fill="#1d4d63" text-anchor="middle">fx</text></svg>
<svg style="left:42px;top:372px;" width="18" height="18" viewBox="0 0 18 18"><path d="M0.500 3.500L4 0.500L7.500 4.500L4 7.500Z" fill="#1d4d63"/><path d="M8.300 5.500V15" stroke="#111" stroke-width="1.700"/><path d="M10 5L12.800 2.300L15.300 4.800L12.500 7.500ZM10 14L12.800 11.300L15.300 13.800L12.500 16.500Z" fill="#f6921e"/></svg>
<svg style="left:61px;top:390px;" width="18" height="18" viewBox="0 0 18 18"><path d="M2.200 1.500H9.500L14.500 6V16Q14.500 17 13.500 17H2.200Q1.200 17 1.200 16V2.500Q1.200 1.500 2.200 1.500Z" fill="#fff" stroke="#3f7f8f" stroke-width="1"/><path d="M9.500 1.500V6H14.500" fill="#e4ecf0" stroke="#8fb0bb" stroke-width="0.800"/><path d="M2.800 8.500L5.200 6.200L7.500 8.500L5.200 10.800Z" fill="#1d4d63"/><path d="M7.500 8.500H9M9 8.500V13.500H10" stroke="#9aa7ae" stroke-width="0.800" fill="none"/><path d="M9 8.500L11 6.500L13 8.500L11 10.500ZM9.300 13.500L11.300 11.500L13.300 13.500L11.300 15.500Z" fill="#f6921e"/></svg>
<svg style="left:61px;top:408px;" width="18" height="18" viewBox="0 0 18 18"><path d="M2.200 1.500H9.500L14.500 6V16Q14.500 17 13.500 17H2.200Q1.200 17 1.200 16V2.500Q1.200 1.500 2.200 1.500Z" fill="#fff" stroke="#3f7f8f" stroke-width="1"/><path d="M9.500 1.500V6H14.500" fill="#e4ecf0" stroke="#8fb0bb" stroke-width="0.800"/><path d="M2.800 8.500L5.200 6.200L7.500 8.500L5.200 10.800Z" fill="#1d4d63"/><path d="M7.500 8.500H9M9 8.500V13.500H10" stroke="#9aa7ae" stroke-width="0.800" fill="none"/><path d="M9 8.500L11 6.500L13 8.500L11 10.500ZM9.300 13.500L11.300 11.500L13.300 13.500L11.300 15.500Z" fill="#f6921e"/></svg>
<svg style="left:61px;top:426px;" width="18" height="18" viewBox="0 0 18 18"><path d="M2.200 1.500H9.500L14.500 6V16Q14.500 17 13.500 17H2.200Q1.200 17 1.200 16V2.500Q1.200 1.500 2.200 1.500Z" fill="#fff" stroke="#3f7f8f" stroke-width="1"/><path d="M9.500 1.500V6H14.500" fill="#e4ecf0" stroke="#8fb0bb" stroke-width="0.800"/><path d="M2.800 8.500L5.200 6.200L7.500 8.500L5.200 10.800Z" fill="#1d4d63"/><path d="M7.500 8.500H9M9 8.500V13.500H10" stroke="#9aa7ae" stroke-width="0.800" fill="none"/><path d="M9 8.500L11 6.500L13 8.500L11 10.500ZM9.300 13.500L11.300 11.500L13.300 13.500L11.300 15.500Z" fill="#f6921e"/></svg>
<svg style="left:61px;top:444px;" width="18" height="18" viewBox="0 0 18 18"><path d="M2.200 1.500H9.500L14.500 6V16Q14.500 17 13.500 17H2.200Q1.200 17 1.200 16V2.500Q1.200 1.500 2.200 1.500Z" fill="#fff" stroke="#3f7f8f" stroke-width="1"/><path d="M9.500 1.500V6H14.500" fill="#e4ecf0" stroke="#8fb0bb" stroke-width="0.800"/><path d="M2.800 8.500L5.200 6.200L7.500 8.500L5.200 10.800Z" fill="#1d4d63"/><path d="M7.500 8.500H9M9 8.500V13.500H10" stroke="#9aa7ae" stroke-width="0.800" fill="none"/><path d="M9 8.500L11 6.500L13 8.500L11 10.500ZM9.300 13.500L11.300 11.500L13.300 13.500L11.300 15.500Z" fill="#f6921e"/></svg>
<svg style="left:61px;top:462px;" width="18" height="18" viewBox="0 0 18 18"><path d="M2.200 1.500H9.500L14.500 6V16Q14.500 17 13.500 17H2.200Q1.200 17 1.200 16V2.500Q1.200 1.500 2.200 1.500Z" fill="#fff" stroke="#3f7f8f" stroke-width="1"/><path d="M9.500 1.500V6H14.500" fill="#e4ecf0" stroke="#8fb0bb" stroke-width="0.800"/><path d="M2.800 8.500L5.200 6.200L7.500 8.500L5.200 10.800Z" fill="#1d4d63"/><path d="M7.500 8.500H9M9 8.500V13.500H10" stroke="#9aa7ae" stroke-width="0.800" fill="none"/><path d="M9 8.500L11 6.500L13 8.500L11 10.500ZM9.300 13.500L11.300 11.500L13.300 13.500L11.300 15.500Z" fill="#f6921e"/></svg>
<svg style="left:61px;top:480px;" width="18" height="18" viewBox="0 0 18 18"><path d="M2.200 1.500H9.500L14.500 6V16Q14.500 17 13.500 17H2.200Q1.200 17 1.200 16V2.500Q1.200 1.500 2.200 1.500Z" fill="#fff" stroke="#3f7f8f" stroke-width="1"/><path d="M9.500 1.500V6H14.500" fill="#e4ecf0" stroke="#8fb0bb" stroke-width="0.800"/><path d="M2.800 8.500L5.200 6.200L7.500 8.500L5.200 10.800Z" fill="#1d4d63"/><path d="M7.500 8.500H9M9 8.500V13.500H10" stroke="#9aa7ae" stroke-width="0.800" fill="none"/><path d="M9 8.500L11 6.500L13 8.500L11 10.500ZM9.300 13.500L11.300 11.500L13.300 13.500L11.300 15.500Z" fill="#f6921e"/></svg>
<svg style="left:61px;top:498px;" width="18" height="18" viewBox="0 0 18 18"><path d="M2.200 1.500H9.500L14.500 6V16Q14.500 17 13.500 17H2.200Q1.200 17 1.200 16V2.500Q1.200 1.500 2.200 1.500Z" fill="#fff" stroke="#3f7f8f" stroke-width="1"/><path d="M9.500 1.500V6H14.500" fill="#e4ecf0" stroke="#8fb0bb" stroke-width="0.800"/><path d="M2.800 8.500L5.200 6.200L7.500 8.500L5.200 10.800Z" fill="#1d4d63"/><path d="M7.500 8.500H9M9 8.500V13.500H10" stroke="#9aa7ae" stroke-width="0.800" fill="none"/><path d="M9 8.500L11 6.500L13 8.500L11 10.500ZM9.300 13.500L11.300 11.500L13.300 13.500L11.300 15.500Z" fill="#f6921e"/></svg>
<svg style="left:42px;top:516px;" width="18" height="18" viewBox="0 0 18 18"><path d="M0 5L3.500 1.500L7 5L3.500 8.500Z" fill="#1fdc2a"/><path d="M11 6H8.500V14.500H11" fill="none" stroke="#a9b4bc" stroke-width="1.300"/><path d="M10.300 6L13 3.300L15.700 6L13 8.700ZM10.300 14.500L13 11.800L15.700 14.500L13 17.200Z" fill="#1f3fe0"/></svg>
<svg style="left:42px;top:534px;" width="18" height="18" viewBox="0 0 18 18"><circle cx="8.300" cy="9" r="7.100" fill="#fff" stroke="#1d4d63" stroke-width="1.300"/><path d="M3 8C3.500 4 9 3.500 9.500 6C10 8.500 6 8 6.500 11C7 13.500 12 13.500 13.500 9.500" fill="none" stroke="#1d4d63" stroke-width="1.200"/><path d="M10 3.500C12 4.500 13 6 12 7.500M4 12C5 14 7 15 9 15" fill="none" stroke="#1d4d63" stroke-width="1"/></svg>
<svg style="left:23px;top:553px;" width="18" height="18" viewBox="0 0 18 18"><path d="M1.500 2.500H16.500V12.500H6L3.500 15V12.500H1.500Z" fill="#eef4f6" stroke="#a3c2cb" stroke-width="1"/><path d="M4.500 6H13.500M4.500 9.500H13.500" stroke="#1d4d63" stroke-width="1.300"/></svg>
<svg style="left:23px;top:570px;" width="18" height="18" viewBox="0 0 18 18"><path d="M1.500 4H16.500V16.500H1.500Z" fill="#e8f0f3" stroke="#1d4d63" stroke-width="1.100"/><path d="M1.500 2.500H7.500L9 4" fill="none" stroke="#1d4d63" stroke-width="1.600"/><circle cx="12" cy="12" r="2.500" fill="#fff" stroke="#55707f" stroke-width="1"/><path d="M12 8V9.500M12 14.500V16M8 12H9.500M14.500 12H16M9.200 9.200L10.200 10.200M13.800 13.800L14.800 14.800M14.800 9.200L13.800 10.200M9.200 14.800L10.200 13.800" stroke="#55707f" stroke-width="1.200"/></svg>
<svg style="left:23px;top:588px;" width="18" height="18" viewBox="0 0 18 18"><path d="M2 1.500H16.500V16.500H2Z" fill="#7ab8b4"/><rect x="5.500" y="1.500" width="7.500" height="6.500" fill="#fff"/><path d="M9.500 3V6" stroke="#f6921e" stroke-width="1.200"/><rect x="2" y="13" width="14.500" height="3.500" fill="#6aaba7"/></svg>
<svg style="left:23px;top:606px;" width="18" height="18" viewBox="0 0 18 18"><circle cx="9" cy="9" r="7.5" fill="#fff" stroke="#1d4d63" stroke-width="1.8"/><path d="M7 5L11.5 9L7 13" fill="none" stroke="#1d4d63" stroke-width="2.2"/></svg>
<svg style="left:42px;top:624px;" width="18" height="18" viewBox="0 0 18 18"><path d="M6.300 3V17" stroke="#5fa8a4" stroke-width="2.500"/><circle cx="11" cy="6" r="2.6" fill="none" stroke="#6b7a85" stroke-width="1.5"/><path d="M11 2V10M7 6H15M8.2 3.2L13.8 8.8M13.8 3.2L8.2 8.8" stroke="#6b7a85" stroke-width="0.9"/><circle cx="11" cy="6" r="1.1" fill="#fff"/></svg>
<svg style="left:24px;top:642px;" width="19" height="18" viewBox="0 0 19 18"><path d="M1 6H17" stroke="#1d4d63" stroke-width="2.400"/><path d="M10 0.500L17.500 6.500H10Z" fill="#1d4d63"/><path d="M17 11.500H1" stroke="#0d0d14" stroke-width="2.400"/><path d="M8.500 17L1 11H8.500Z" fill="#0d0d14"/></svg>
<svg style="left:42px;top:660px;" width="18" height="18" viewBox="0 0 18 18"><rect x="1" y="1" width="7" height="16" fill="#2b2b2b"/><rect x="2.200" y="2.200" width="4.600" height="2.300" fill="#fff"/><path d="M3 6V16M5.800 6V16" stroke="#fff" stroke-width="1"/><path d="M2 8.500H7" stroke="#2b2b2b" stroke-width="1"/><path d="M10.500 10.500L14 3C15 1 18.500 2.500 17.500 4.500L13.800 12.300Z" fill="#8d949c" stroke="#5d656e" stroke-width="0.700"/><path d="M9.500 15.500L10.500 10.500L13.800 12.300Z" fill="#2c6fd0"/><rect x="9.500" y="12" width="1.600" height="1.600" fill="#e33"/><rect x="10.500" y="14.500" width="1.600" height="1.600" fill="#2c3"/><rect x="8.800" y="14" width="1.600" height="1.600" fill="#c3c"/></svg>
<svg style="left:42px;top:678px;" width="18" height="18" viewBox="0 0 18 18"><rect x="1" y="1" width="7" height="16" fill="#2b2b2b"/><rect x="2.200" y="2.200" width="4.600" height="2.300" fill="#fff"/><path d="M3 6V16M5.800 6V16" stroke="#fff" stroke-width="1"/><path d="M2 8.500H7" stroke="#2b2b2b" stroke-width="1"/><path d="M10.500 10.500L14 3C15 1 18.500 2.500 17.500 4.500L13.800 12.300Z" fill="#8d949c" stroke="#5d656e" stroke-width="0.700"/><path d="M9.500 15.500L10.500 10.500L13.800 12.300Z" fill="#2c6fd0"/><rect x="9.500" y="12" width="1.600" height="1.600" fill="#e33"/><rect x="10.500" y="14.500" width="1.600" height="1.600" fill="#2c3"/><rect x="8.800" y="14" width="1.600" height="1.600" fill="#c3c"/></svg>
<svg style="left:23px;top:696px;" width="18" height="18" viewBox="0 0 18 18"><rect x="1" y="0" width="9" height="17" fill="#2b2b2b"/><rect x="2.500" y="1.500" width="3" height="14" fill="#f2f2f2"/><rect x="6.800" y="1.500" width="1.800" height="14" fill="#8a8a8a"/><path d="M4 4.500V9" stroke="#2b2b2b" stroke-width="1.200"/><rect x="10.500" y="11" width="6" height="6" fill="#e6e6e6" stroke="#777" stroke-width="0.900"/><path d="M11.500 12L15.500 16M15.500 12L11.500 16" stroke="#777" stroke-width="0.800"/></svg>
<svg style="left:40px;top:714px;" width="18" height="18" viewBox="0 0 18 18"><rect x="6.5" y="4.5" width="5" height="12" rx="1" fill="#fff" stroke="#5d8f9c" stroke-width="1.1"/><rect x="8" y="1.5" width="2" height="3" fill="#3a8f86"/><path d="M6.5 7.5H11.5" stroke="#5d8f9c" stroke-width="0.9"/></svg>
<svg style="left:40px;top:732px;" width="18" height="18" viewBox="0 0 18 18"><rect x="6.5" y="4.5" width="5" height="12" rx="1" fill="#fff" stroke="#5d8f9c" stroke-width="1.1"/><rect x="8" y="1.5" width="2" height="3" fill="#3a8f86"/><path d="M6.5 7.5H11.5" stroke="#5d8f9c" stroke-width="0.9"/></svg>
<svg style="left:23px;top:750px;" width="19" height="18" viewBox="0 0 19 18"><path d="M1 4L10 9L8 13L0 6Z" fill="#1d4d63"/><ellipse cx="10" cy="10" rx="3.5" ry="4.5" fill="#7fc0c4" stroke="#4a8f95" stroke-width="0.8"/><path d="M12 11L18 15.500L17 17L11 13Z" fill="#4a8f95"/></svg>
<span class="t" style="left:110px;top:578.8px;font-size:17.51px;color:#109a9a;letter-spacing:0.058px;">Double click</span>
<div style="left:209px;top:114px;width:1231px;height:20px;background:#2a3857"></div>
<div style="left:209px;top:134px;width:6px;height:674px;background:#2a3857"></div>
<svg style="left:215px;top:116px;" width="147" height="18" viewBox="0 0 147 18"><path d="M0 18L0 17.500L18.500 0H145V18Z" fill="#ffffff"/></svg>
<span class="t" style="left:248px;top:115.4px;font-size:11.5px;color:#000000;letter-spacing:-0.139px;font-weight:bold;">Scanning MAIN*</span>
<svg style="left:347px;top:121px;" width="10" height="10" viewBox="0 0 10 10"><path d="M1.5 1.5L8.5 8.5M8.5 1.5L1.5 8.500" stroke="#444" stroke-width="1.4"/></svg>
<svg style="left:1425px;top:122px;" width="10" height="7" viewBox="0 0 10 7"><path d="M0.5 0.5H9.5L5 6Z" fill="#ffffff"/></svg>
<div style="left:215px;top:134px;width:1225px;height:652px;background:#ffffff"></div>
<div style="left:215px;top:134px;width:1225px;height:27px;background:#d1d6e6"></div>
<div style="left:216px;top:160px;width:1206px;height:1px;background:#a4adc0"></div>
<div style="left:216px;top:161px;width:1205px;height:23px;background:#f0f0f0"></div>
<div style="left:216px;top:184px;width:1205px;height:1px;background:#7f8899"></div>
<div style="left:1046px;top:165px;width:1px;height:16px;background:#c4c4c4"></div>
<span class="t" style="left:1052px;top:163.4px;font-size:11.76px;color:#000000;letter-spacing:0.010px;">Comment</span>
<div style="left:216px;top:205px;width:1205px;height:1px;background:#e6e6e6"></div>
<div style="left:216px;top:225px;width:1205px;height:1px;background:#e6e6e6"></div>
<div style="left:1046px;top:185px;width:1px;height:58px;background:#ededed"></div>
<div style="left:1421px;top:161px;width:19px;height:101px;background:#d1d6e6"></div>
<div style="left:1421px;top:161px;width:17px;height:101px;background:#dde1ef"></div>
<div style="left:1426px;top:178px;width:8px;height:47px;background:#b9bdc9"></div>
<svg style="left:1425px;top:165px;" width="10" height="7" viewBox="0 0 10 7"><path d="M0.5 6.500H9.500L5 1Z" fill="#777"/></svg>
<svg style="left:1425px;top:233px;" width="10" height="7" viewBox="0 0 10 7"><path d="M0.5 0.5H9.500L5 6Z" fill="#777"/></svg>
<div style="left:216px;top:243px;width:1222px;height:19px;background:#dde1ef"></div>
<svg style="left:1409px;top:247px;" width="7" height="10" viewBox="0 0 7 10"><path d="M0.5 0.5V9.500L6 5Z" fill="#777"/></svg>
<div style="left:216px;top:262px;width:1224px;height:6px;background:#d1d6e6"></div>
<div style="left:216px;top:267px;width:1222px;height:269px;background:#ffffff;border:1px solid #8e8e8e;box-shadow:inset 0 0 0 1px #d4d4d4;box-sizing:border-box"></div>
<div style="left:217px;top:272px;width:1220px;height:12px;background:#e6e9f5"></div>
<div style="left:217px;top:355px;width:1220px;height:1px;background:#c9c9c9"></div>
<div style="left:217px;top:519px;width:1220px;height:16px;background:#d1d6e6"></div>
<svg style="left:1425px;top:522px;" width="7" height="10" viewBox="0 0 7 10"><path d="M0.5 0.5V9.500L6 5Z" fill="#777"/></svg>
<div style="left:1438px;top:262px;width:2px;height:276px;background:#d1d6e6"></div>
<div style="left:216px;top:536px;width:1224px;height:2px;background:#d1d6e6"></div>
<div style="left:216px;top:538px;width:1224px;height:7px;background:#2a3857"></div>
<div style="left:216px;top:545px;width:1224px;height:22px;background:#4a5d82"></div>
<svg style="left:1405px;top:550px;" width="10" height="12" viewBox="0 0 10 12"><path d="M3 1H7V6H3ZM1.5 6.500H8.500M5 6.500V11" fill="none" stroke="#fff" stroke-width="1.3"/></svg>
<svg style="left:1424px;top:551px;" width="11" height="11" viewBox="0 0 11 11"><path d="M1.5 1.5L9.500 9.500M9.500 1.5L1.5 9.500" stroke="#fff" stroke-width="1.8"/></svg>
<div style="left:216px;top:567px;width:1224px;height:219px;background:#ffffff"></div>
<div style="left:216px;top:612px;width:1224px;height:1px;background:#ececec"></div>
<div style="left:216px;top:633px;width:1224px;height:1px;background:#ececec"></div>
<div style="left:216px;top:654px;width:1224px;height:1px;background:#ececec"></div>
<div style="left:216px;top:675px;width:1224px;height:1px;background:#ececec"></div>
<div style="left:216px;top:696px;width:1224px;height:1px;background:#ececec"></div>
<div style="left:216px;top:717px;width:1224px;height:1px;background:#ececec"></div>
<div style="left:216px;top:738px;width:1224px;height:1px;background:#ececec"></div>
<div style="left:216px;top:759px;width:1224px;height:1px;background:#ececec"></div>
<div style="left:216px;top:780px;width:1224px;height:1px;background:#ececec"></div>
<div style="left:255px;top:567px;width:1px;height:219px;background:#ececec"></div>
<div style="left:335px;top:567px;width:1px;height:219px;background:#ececec"></div>
<div style="left:415px;top:567px;width:1px;height:219px;background:#ececec"></div>
<div style="left:495px;top:567px;width:1px;height:219px;background:#ececec"></div>
<div style="left:209px;top:786px;width:1231px;height:22px;background:#4a5d82"></div>
<div style="left:209px;top:786px;width:6px;height:22px;background:#2a3857"></div>
<div style="left:0px;top:808px;width:1440px;height:2px;background:#0078d7"></div>
<div style="left:216px;top:786px;width:129px;height:21px;background:#ffffff"></div>
<svg style="left:221px;top:789px;" width="12" height="15" viewBox="0 0 12 15"><rect x="0.5" y="0.5" width="11" height="14" fill="#e8eef2" stroke="#1d4d63" stroke-width="1"/><rect x="0" y="0" width="12" height="3.500" fill="#1d4d63"/><path d="M2.500 6.500H9.500M2.500 9H9.500M2.500 11.500H9.500" stroke="#55707f" stroke-width="1"/></svg>
<span class="t" style="left:237px;top:786.9px;font-size:12.32px;color:#1f5fa6;">Information Output</span>
<svg style="left:353px;top:789px;" width="12" height="15" viewBox="0 0 12 15"><rect x="0.5" y="0.5" width="11" height="14" fill="#e8eef2" stroke="#1d4d63" stroke-width="1"/><rect x="0" y="0" width="12" height="3.500" fill="#1d4d63"/><path d="M2.500 6.500H9.500M2.500 9H9.500M2.500 11.500H9.500" stroke="#55707f" stroke-width="1"/></svg>
<span class="t" style="left:368px;top:787.6999999999999px;font-size:11.5px;color:#ffffff;letter-spacing:-0.281px;">Search / Replace</span>
<svg style="left:466px;top:789px;" width="12" height="15" viewBox="0 0 12 15"><rect x="0.5" y="0.5" width="11" height="14" fill="#e8eef2" stroke="#1d4d63" stroke-width="1"/><rect x="0" y="0" width="12" height="3.500" fill="#1d4d63"/><path d="M2.500 6.500H9.500M2.500 9H9.500M2.500 11.500H9.500" stroke="#55707f" stroke-width="1"/></svg>
<span class="t" style="left:481px;top:787.6999999999999px;font-size:11.5px;color:#ffffff;letter-spacing:-0.291px;">PLC Verify result</span>
<svg style="left:577px;top:789px;" width="12" height="15" viewBox="0 0 12 15"><rect x="0.5" y="0.5" width="11" height="14" fill="#e8eef2" stroke="#1d4d63" stroke-width="1"/><rect x="0" y="0" width="12" height="3.500" fill="#1d4d63"/><path d="M2.500 6.500H9.500M2.500 9H9.500M2.500 11.500H9.500" stroke="#55707f" stroke-width="1"/></svg>
<span class="t" style="left:592px;top:787.6999999999999px;font-size:11.5px;color:#ffffff;letter-spacing:-0.121px;">Device usage list</span>
<svg style="left:691px;top:789px;" width="12" height="15" viewBox="0 0 12 15"><rect x="0.5" y="0.5" width="11" height="14" fill="#e8eef2" stroke="#1d4d63" stroke-width="1"/><rect x="0" y="0" width="12" height="3.500" fill="#1d4d63"/><path d="M2.500 6.500H9.500M2.500 9H9.500M2.500 11.500H9.500" stroke="#55707f" stroke-width="1"/></svg>
<span class="t" style="left:706px;top:787.6999999999999px;font-size:11.5px;color:#ffffff;letter-spacing:-0.290px;">Progress</span>
<div style="left:218px;top:139px;width:783px;height:581px;background:#e7eaf4;border:1px solid #0f5f9f;box-sizing:border-box;box-shadow:0 0 6px rgba(40,100,170,0.450)"></div>
<div style="left:219px;top:140px;width:781px;height:30px;background:#d7dbea"></div>
<span class="t" style="left:230px;top:147.70000000000002px;font-size:11.65px;color:#1b2440;letter-spacing:0.004px;">EtherCAT configuration</span>
<svg style="left:978px;top:146px;" width="9" height="9" viewBox="0 0 9 9"><path d="M1 1L8 8M8 1L1 8" stroke="#666" stroke-width="1.500"/></svg>
<span class="t" style="left:235px;top:172.9px;font-size:12.76px;color:#1f5fa6;letter-spacing:0.005px;">Slave parameters</span>
<div style="left:235px;top:195px;width:101px;height:3px;background:#0078d7"></div>
<span class="t" style="left:349px;top:172.9px;font-size:12.85px;color:#1b2440;letter-spacing:0.003px;">Process data</span>
<span class="t" style="left:437px;top:172.9px;font-size:12.88px;color:#1b2440;letter-spacing:0.486px;">I/O mapping</span>
<span class="t" style="left:525px;top:172.9px;font-size:12.88px;color:#1b2440;letter-spacing:0.141px;">Start parameters</span>
<span class="t" style="left:636px;top:172.9px;font-size:12.88px;color:#1b2440;letter-spacing:0.095px;">Slave information</span>
<div style="left:230px;top:197px;width:757px;height:1px;background:#c9ccd6"></div>
<div style="left:235px;top:195px;width:101px;height:3px;background:#0078d7"></div>
<div style="left:230px;top:200px;width:757px;height:478px;background:#e8ebf5;border:2px solid #e0e3ee;border-right-color:#f4f5fa;border-bottom-color:#f4f5fa;box-sizing:border-box"></div>
<div style="left:246px;top:210px;width:719px;height:130px;border:1px solid #c3c6d0;border-radius:0 4px 4px 6px;box-sizing:border-box"></div>
<svg style="left:253px;top:215px;" width="11" height="11" viewBox="0 0 11 11"><rect x="0.5" y="0.5" width="10" height="10" fill="#ffffff" stroke="#7d8798"/></svg>
<span class="t" style="left:267px;top:210.6px;font-size:12.88px;color:#1b2440;letter-spacing:0.017px;">Enable expert par...</span>
<div style="left:265.5px;top:212.5px;width:116px;height:16px;border:1px dotted #333;box-sizing:border-box"></div>
<svg style="left:277px;top:234.5px;" width="11" height="11" viewBox="0 0 11 11"><rect x="0.5" y="0.5" width="10" height="10" fill="#ffffff" stroke="#c3c5cd"/><path d="M2.500 5.500L4.500 8L8.500 2.500" fill="none" stroke="#b9bbc3" stroke-width="1.500"/></svg>
<span class="t" style="left:291px;top:229.8px;font-size:12.53px;color:#8f929c;letter-spacing:0.005px;">Check Vend...</span>
<svg style="left:277px;top:260.5px;" width="11" height="11" viewBox="0 0 11 11"><rect x="0.5" y="0.5" width="10" height="10" fill="#ffffff" stroke="#c3c5cd"/><path d="M2.500 5.500L4.500 8L8.500 2.500" fill="none" stroke="#b9bbc3" stroke-width="1.500"/></svg>
<span class="t" style="left:291px;top:255.70000000000002px;font-size:12.76px;color:#8f929c;letter-spacing:0.005px;">Check pr...</span>
<svg style="left:277px;top:288.5px;" width="11" height="11" viewBox="0 0 11 11"><rect x="0.5" y="0.5" width="10" height="10" fill="#ffffff" stroke="#c3c5cd"/></svg>
<span class="t" style="left:291px;top:283.79999999999995px;font-size:12.62px;color:#8f929c;letter-spacing:0.003px;">Check version nu...</span>
<span class="t" style="left:276px;top:306.9px;font-size:12.59px;color:#1b2440;letter-spacing:0.009px;">SDO Access timeout.</span>
<div style="left:427px;top:282px;width:159px;height:25px;background:#ffffff;border:1px solid #707070;box-sizing:border-box"></div>
<div style="left:567px;top:284px;width:17px;height:21px;background:#f0f0f0"></div>
<svg style="left:572.5px;top:292.5px;" width="6" height="4" viewBox="0 0 6 4"><path d="M0.300 0.300H5.700L3 3.500Z" fill="#606060"/></svg>
<span class="t" style="left:432px;top:285.09999999999997px;font-size:12.5px;color:#8f929c;letter-spacing:1px;">==</span>
<div style="left:427px;top:311px;width:159px;height:22px;background:#e9eaf0;border:1px solid #8a8a8a;box-sizing:border-box"></div>
<span class="t" style="left:432px;top:313.2px;font-size:12.13px;color:#8f929c;letter-spacing:0.005px;">1000</span>
<div style="left:244px;top:208px;width:149px;height:25.5px;border:3.700px solid #109a9a;border-radius:6px;box-sizing:border-box"></div>
<span class="t" style="left:406px;top:211.1px;font-size:17px;color:#109a9a;letter-spacing:0.385px;">Before ticking</span>
<div style="left:621px;top:200px;width:783px;height:581px;background:#e7eaf4;border:1px solid #0f5f9f;box-sizing:border-box;box-shadow:0 0 6px rgba(40,100,170,0.450)"></div>
<div style="left:622px;top:201px;width:781px;height:30px;background:#d7dbea"></div>
<span class="t" style="left:633px;top:208.70000000000002px;font-size:11.65px;color:#1b2440;letter-spacing:0.004px;">EtherCAT configuration</span>
<svg style="left:1381px;top:207px;" width="9" height="9" viewBox="0 0 9 9"><path d="M1 1L8 8M8 1L1 8" stroke="#666" stroke-width="1.500"/></svg>
<span class="t" style="left:638px;top:233.9px;font-size:12.76px;color:#1f5fa6;letter-spacing:0.005px;">Slave parameters</span>
<div style="left:638px;top:256px;width:101px;height:3px;background:#0078d7"></div>
<span class="t" style="left:752px;top:233.9px;font-size:12.88px;color:#1b2440;letter-spacing:0.082px;">Expert process data</span>
<span class="t" style="left:882px;top:233.9px;font-size:12.85px;color:#1b2440;letter-spacing:0.003px;">Process data</span>
<span class="t" style="left:970px;top:233.9px;font-size:12.88px;color:#1b2440;letter-spacing:0.486px;">I/O mapping</span>
<span class="t" style="left:1058px;top:233.9px;font-size:12.88px;color:#1b2440;letter-spacing:0.141px;">Start parameters</span>
<span class="t" style="left:1169px;top:233.9px;font-size:12.88px;color:#1b2440;letter-spacing:0.095px;">Slave information</span>
<div style="left:633px;top:258px;width:757px;height:1px;background:#c9ccd6"></div>
<div style="left:638px;top:256px;width:101px;height:3px;background:#0078d7"></div>
<div style="left:633px;top:261px;width:757px;height:478px;background:#e8ebf5;border:2px solid #e0e3ee;border-right-color:#f4f5fa;border-bottom-color:#f4f5fa;box-sizing:border-box"></div>
<div style="left:649px;top:271px;width:719px;height:130px;border:1px solid #c3c6d0;border-radius:0 4px 4px 6px;box-sizing:border-box"></div>
<svg style="left:656px;top:276px;" width="11" height="11" viewBox="0 0 11 11"><rect x="0.5" y="0.5" width="10" height="10" fill="#ffffff" stroke="#7d8798"/><path d="M2.500 5.500L4.500 8L8.500 2.500" fill="none" stroke="#707070" stroke-width="1.500"/></svg>
<span class="t" style="left:670px;top:271.59999999999997px;font-size:12.88px;color:#1b2440;letter-spacing:0.017px;">Enable expert par...</span>
<div style="left:668.5px;top:273.5px;width:116px;height:16px;border:1px dotted #333;box-sizing:border-box"></div>
<svg style="left:680px;top:295.5px;" width="11" height="11" viewBox="0 0 11 11"><rect x="0.5" y="0.5" width="10" height="10" fill="#ffffff" stroke="#7d8798"/><path d="M2.500 5.500L4.500 8L8.500 2.500" fill="none" stroke="#707070" stroke-width="1.500"/></svg>
<span class="t" style="left:694px;top:290.79999999999995px;font-size:12.53px;color:#1b2440;letter-spacing:0.005px;">Check Vend...</span>
<svg style="left:680px;top:321.5px;" width="11" height="11" viewBox="0 0 11 11"><rect x="0.5" y="0.5" width="10" height="10" fill="#ffffff" stroke="#7d8798"/><path d="M2.500 5.500L4.500 8L8.500 2.500" fill="none" stroke="#707070" stroke-width="1.500"/></svg>
<span class="t" style="left:694px;top:316.7px;font-size:12.76px;color:#1b2440;letter-spacing:0.005px;">Check pr...</span>
<svg style="left:680px;top:349.5px;" width="11" height="11" viewBox="0 0 11 11"><rect x="0.5" y="0.5" width="10" height="10" fill="#ffffff" stroke="#7d8798"/></svg>
<span class="t" style="left:694px;top:344.79999999999995px;font-size:12.62px;color:#1b2440;letter-spacing:0.003px;">Check version nu...</span>
<span class="t" style="left:679px;top:367.9px;font-size:12.59px;color:#1b2440;letter-spacing:0.009px;">SDO Access timeout.</span>
<div style="left:830px;top:343px;width:159px;height:25px;background:#ffffff;border:1px solid #707070;box-sizing:border-box"></div>
<div style="left:970px;top:345px;width:17px;height:21px;background:#f0f0f0"></div>
<svg style="left:975.5px;top:353.5px;" width="6" height="4" viewBox="0 0 6 4"><path d="M0.300 0.300H5.700L3 3.500Z" fill="#606060"/></svg>
<span class="t" style="left:835px;top:346.09999999999997px;font-size:12.5px;color:#6f6f6f;letter-spacing:1px;">==</span>
<div style="left:830px;top:372px;width:159px;height:22px;background:#ffffff;border:1px solid #b9bbc4;box-sizing:border-box"></div>
<span class="t" style="left:835px;top:374.2px;font-size:12.13px;color:#1b2440;letter-spacing:0.005px;">1000</span>
<div style="left:1117px;top:746px;width:75px;height:23px;background:#d8dcea;border:1px solid #9a9ea8;box-sizing:border-box"></div>
<span class="t" style="left:1137.0px;top:747.4px;font-size:12.35px;color:#1b2440;">Check</span>
<div style="left:1207px;top:746px;width:75px;height:23px;background:#d8dcea;border:1px solid #1f5fa6;box-sizing:border-box"></div>
<span class="t" style="left:1231.0px;top:747.4px;font-size:11.84px;color:#1b2440;letter-spacing:0.010px;">Save</span>
<div style="left:1307px;top:746px;width:75px;height:23px;background:#d8dcea;border:1px solid #9a9ea8;box-sizing:border-box"></div>
<span class="t" style="left:1328.5px;top:747.4px;font-size:12.51px;color:#1b2440;letter-spacing:0.008px;">Close</span>
<div style="left:642px;top:267px;width:159px;height:25px;border:3.700px solid #109a9a;border-radius:6px;box-sizing:border-box"></div>
<span class="t" style="left:806px;top:268.29999999999995px;font-size:17px;color:#109a9a;letter-spacing:0.266px;">After ticking</span>
<svg style="left:636px;top:286px;" width="402" height="124" viewBox="0 0 402 124"><rect x="8" y="6.700" width="385" height="109.300" rx="6" fill="none" stroke="#109a9a" stroke-width="4" stroke-dasharray="11.600 4.400"/></svg>
<svg style="left:736px;top:226px;" width="150" height="38" viewBox="0 0 150 38"><rect x="7.100" y="6" width="135.800" height="24" rx="6" fill="none" stroke="#109a9a" stroke-width="3.900" stroke-dasharray="11.500 4.400" stroke-dashoffset="9.500"/></svg>
<svg style="left:170px;top:605px;" width="48" height="58" viewBox="0 0 48 58"><path d="M6.700 51.700L30 24" stroke="#109a9a" stroke-width="4"/><path d="M43.200 7L22.300 20.400L36.700 28.400Z" fill="#109a9a"/></svg>
</div></body></html>
